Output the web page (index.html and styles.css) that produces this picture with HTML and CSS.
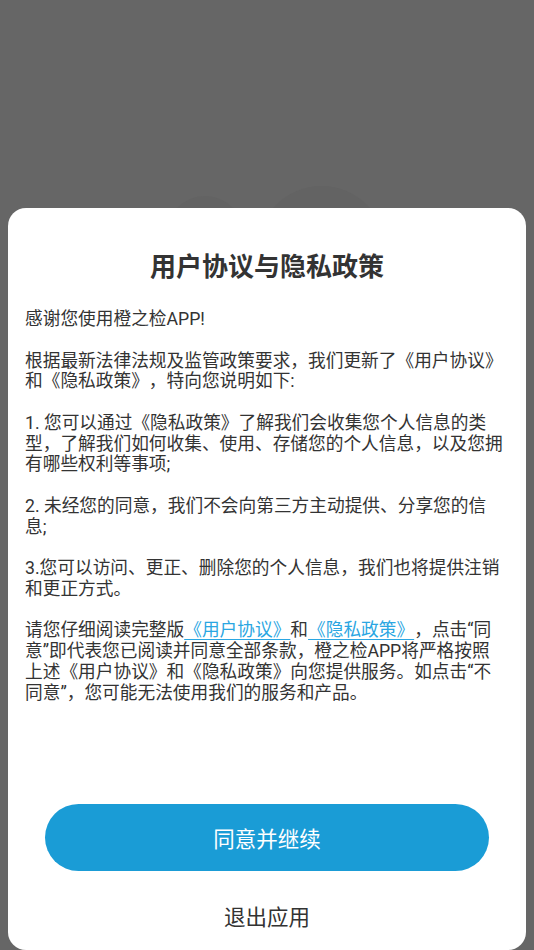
FILE: index.html
```html
<!DOCTYPE html>
<html lang="zh-CN">
<head>
<meta charset="utf-8">
<title>用户协议与隐私政策</title>
<link rel="stylesheet" href="styles.css">
</head>
<body>
<div class="backdrop">
  <span class="blob blob-a"></span>
  <span class="blob blob-b"></span>
</div>
<section class="sheet">
  <h1 class="sheet-title">用户协议与隐私政策</h1>
  <div class="sheet-body">
    <p>感谢您使用橙之检APP!</p>
    <p>根据最新法律法规及监管政策要求，我们更新了《用户协议》和《隐私政策》，特向您说明如下:</p>
    <p>1. 您可以通过《隐私政策》了解我们会收集您个人信息的类型，了解我们如何收集、使用、存储您的个人信息，以及您拥有哪些权利等事项;</p>
    <p>2. 未经您的同意，我们不会向第三方主动提供、分享您的信息;</p>
    <p>3.您可以访问、更正、删除您的个人信息，我们也将提供注销和更正方式。</p>
    <p>请您仔细阅读完整版<a class="doc-link" href="#">《用户协议》</a>和<a class="doc-link" href="#">《隐私政策》</a>，点击“同意”即代表您已阅读并同意全部条款，橙之检APP将严格按照上述《用户协议》和《隐私政策》向您提供服务。如点击“不同意”，您可能无法使用我们的服务和产品。</p>
  </div>
  <button class="btn-agree" type="button">同意并继续</button>
  <button class="btn-exit" type="button">退出应用</button>
</section>
</body>
</html>
```

FILE: styles.css
```css
html, body {
  margin: 0;
  padding: 0;
}

body {
  width: 534px;
  height: 950px;
  overflow: hidden;
  background: #666666;
  display: flex;
  flex-direction: column;
  justify-content: flex-end;
  font-family: Roboto, "Noto Sans CJK SC", "Noto Sans", sans-serif;
  color: #333333;
  position: relative;
  text-spacing-trim: space-all;
}

.backdrop {
  position: absolute;
  inset: 0;
  z-index: 0;
}

.blob {
  position: absolute;
  border-radius: 50%;
  background: #636363;
}

.blob-a {
  left: 166px;
  top: 196px;
  width: 78px;
  height: 78px;
}

.blob-b {
  left: 257px;
  top: 186px;
  width: 129px;
  height: 129px;
}

.sheet {
  position: relative;
  z-index: 1;
  margin: 0 8px;
  height: 742px;
  box-sizing: border-box;
  background: #ffffff;
  border-radius: 18px;
  padding: 42px 21px 0 17px;
  display: flex;
  flex-direction: column;
}

.sheet-title {
  margin: 0;
  font-family: "Noto Sans CJK SC", sans-serif;
  font-size: 26px;
  line-height: 30px;
  font-weight: 700;
  text-align: center;
  color: #333333;
  padding-left: 4px;
}

.sheet-body {
  margin-top: 29px;
  width: 480px;
  font-size: 17.7px;
  line-height: 20.75px;
  color: #333333;
}

.sheet-body p {
  margin: 0 0 20.75px;
}

.sheet-body p:last-child {
  margin-bottom: 0;
}

.doc-link {
  color: #2aa6e2;
  text-decoration: underline;
  text-decoration-color: #2aa6e2;
  text-underline-offset: 3px;
  text-decoration-thickness: 1px;
}

.btn-agree {
  align-self: center;
  margin: 101px 0 0 4px;
  width: 444px;
  height: 67px;
  border: none;
  border-radius: 34px;
  background: #1a9cd6;
  color: #ffffff;
  font-family: "Noto Sans CJK SC", sans-serif;
  font-size: 21.5px;
  padding: 0;
}

.btn-exit {
  align-self: center;
  margin: 33px 0 0 4px;
  border: none;
  background: none;
  padding: 0;
  height: 24px;
  line-height: 24px;
  font-family: "Noto Sans CJK SC", sans-serif;
  font-size: 21.5px;
  color: #333333;
}
```
